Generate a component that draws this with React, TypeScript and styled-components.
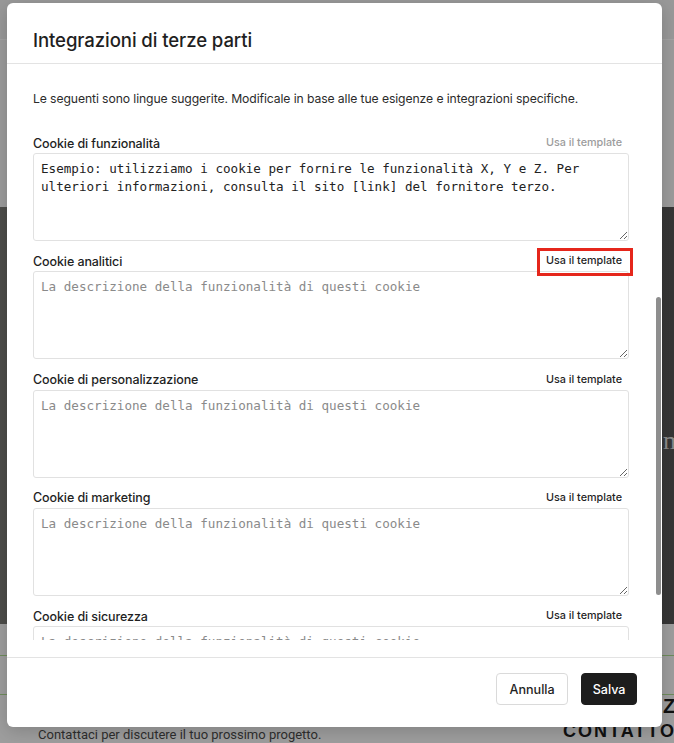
import React from "react";
import styled, { createGlobalStyle } from "styled-components";

const GlobalStyle = createGlobalStyle`
  html, body {
    margin: 0;
    height: 100%;
    overflow: hidden;
  }
  body {
    font-family: Inter, "Liberation Sans", sans-serif;
    background: #9b9b9b;
  }
  * {
    box-sizing: border-box;
  }
`;

type CookieField = {
  label: string;
  value?: string;
  templateDisabled?: boolean;
  highlighted?: boolean;
};

const PLACEHOLDER = "La descrizione della funzionalità di questi cookie";

const fields: CookieField[] = [
  {
    label: "Cookie di funzionalità",
    value:
      "Esempio: utilizziamo i cookie per fornire le funzionalità X, Y e Z. Per ulteriori informazioni, consulta il sito [link] del fornitore terzo.",
    templateDisabled: true,
  },
  { label: "Cookie analitici", highlighted: true },
  { label: "Cookie di personalizzazione" },
  { label: "Cookie di marketing" },
  { label: "Cookie di sicurezza" },
];

const Page = styled.div`
  position: relative;
  width: 674px;
  height: 743px;
  overflow: hidden;
  background: #9b9b9b;
`;
const PageNav = styled.div`
  height: 40px;
  border-bottom: 1px solid #a3a3a3;
  background: #999999;
`;
const PageIntro = styled.div`
  height: 167px;
  background: #9c9c9c;
`;
const Hero = styled.div`
  height: 417px;
  padding-top: 219px;
  background: linear-gradient(90deg, #4d4d4a 0%, #454543 60%, #363636 100%);
  overflow: hidden;
`;
const HeroWord = styled.div`
  padding-left: 663px;
  font-family: "Liberation Serif", serif;
  font-size: 26px;
  line-height: 30px;
  color: #8c8c8c;
  white-space: nowrap;
`;
const ContactGrid = styled.div`
  display: grid;
  grid-template-columns: 563px 1fr;
  grid-template-rows: 31px 1px 38px 1px auto;
  background: #9e9e9e;
`;
const Rule = styled.div<{ $row: number }>`
  grid-column: 1 / -1;
  grid-row: ${(p) => p.$row};
  background: #6f8c5c;
`;
const ContactText = styled.p`
  grid-column: 1;
  grid-row: 5;
  margin: 32px 0 0;
  padding-left: 38px;
  font-family: Roboto, "Liberation Sans", sans-serif;
  font-size: 13px;
  line-height: 16px;
  color: #2e2e2e;
`;
const ContactHeading = styled.h2`
  grid-column: 2;
  grid-row: 4 / 6;
  margin: 0;
  font-family: "Liberation Sans", sans-serif;
  font-size: 18px;
  font-weight: 700;
  line-height: 24px;
  letter-spacing: 2px;
  color: #111;
  white-space: nowrap;
`;
const HeadingIndent = styled.span`
  padding-left: 100px;
  font-size: 20px;
`;

/* dialog */
const Dialog = styled.div`
  position: absolute;
  left: 7px;
  top: 3px;
  width: 655px;
  height: 724px;
  display: flex;
  flex-direction: column;
  background: #fff;
  border-radius: 6px;
  box-shadow: 0 4px 18px rgba(0, 0, 0, 0.18);
  overflow: hidden;
`;
const DialogHeader = styled.header`
  padding: 25px 26px 11px;
  border-bottom: 1px solid #e3e3e3;
`;
const DialogTitle = styled.h1`
  margin: 0;
  font-size: 18.6px;
  font-weight: 500;
  line-height: 24px;
  color: #1f1f1f;
  letter-spacing: -0.1px;
`;
const DialogBody = styled.div`
  position: relative;
  flex: 1;
  display: flex;
  flex-direction: column;
  padding-bottom: 17px;
  min-height: 0;
`;
const ScrollArea = styled.div`
  flex: 1;
  overflow: hidden;
  padding: 27px 33px 0 26px;
`;
const ScrollThumb = styled.div`
  position: absolute;
  top: 233px;
  right: 1px;
  width: 5px;
  height: 298px;
  border-radius: 3px;
  background: #8e8e8e;
`;
const Intro = styled.p`
  margin: 0 0 27px;
  font-size: 12.2px;
  line-height: 16px;
  color: #2b2b2b;
  letter-spacing: -0.1px;
`;
const Field = styled.div`
  margin-bottom: 11.25px;
`;
const FieldHead = styled.div`
  display: flex;
  align-items: center;
  justify-content: space-between;
  height: 18px;
  margin-bottom: 1px;
`;
const FieldLabel = styled.label`
  font-size: 12.5px;
  font-weight: 500;
  color: #1f1f1f;
  letter-spacing: -0.1px;
`;
const TemplateButton = styled.button<{ $highlighted?: boolean }>`
  position: relative;
  margin-right: 7px;
  padding: 0;
  border: none;
  background: none;
  font-family: inherit;
  font-size: 10.8px;
  font-weight: 500;
  line-height: 14px;
  color: #1f1f1f;
  cursor: pointer;

  &:disabled {
    color: #9c9c9c;
    cursor: default;
  }

  &::after {
    content: "";
    display: ${(p) => (p.$highlighted ? "block" : "none")};
    position: absolute;
    top: -6px;
    right: -11px;
    bottom: -8px;
    left: -9px;
    border: 3px solid #e5261b;
  }
`;
const TextBox = styled.textarea`
  display: block;
  width: 100%;
  height: 88px;
  padding: 6px 7px;
  border: 1px solid #e1e1e1;
  border-radius: 3px;
  font-family: "DejaVu Sans Mono", "Liberation Mono", monospace;
  font-size: 12.6px;
  line-height: 18px;
  color: #222;
  resize: vertical;
  outline: none;

  &::placeholder {
    color: #8a8a8a;
  }
`;
const DialogFooter = styled.footer`
  display: flex;
  justify-content: flex-end;
  gap: 13px;
  padding: 15px 25px 22px;
  border-top: 1px solid #e3e3e3;
`;
const Button = styled.button<{ $primary?: boolean }>`
  height: 32px;
  padding: 0 ${(p) => (p.$primary ? "10.5px" : "12.5px")};
  border: 1px solid ${(p) => (p.$primary ? "#1d1d1d" : "#dadada")};
  border-radius: 4px;
  background: ${(p) => (p.$primary ? "#1d1d1d" : "#fff")};
  color: ${(p) => (p.$primary ? "#fff" : "#1f1f1f")};
  font-family: inherit;
  font-size: 12.6px;
  font-weight: 500;
  cursor: pointer;
`;

const App = () => {
  return (
    <>
      <GlobalStyle />
      <Page>
        <PageNav />
        <PageIntro />
        <Hero>
          <HeroWord>mondo</HeroWord>
        </Hero>
        <ContactGrid>
          <Rule $row={2} />
          <Rule $row={4} />
          <ContactText>Contattaci per discutere il tuo prossimo progetto.</ContactText>
          <ContactHeading>
            <HeadingIndent>ZONA</HeadingIndent>
            <br />
            CONTATTO
          </ContactHeading>
        </ContactGrid>

        <Dialog role="dialog" aria-modal="true">
          <DialogHeader>
            <DialogTitle>Integrazioni di terze parti</DialogTitle>
          </DialogHeader>
          <DialogBody>
            <ScrollArea>
              <Intro>
                Le seguenti sono lingue suggerite. Modificale in base alle tue
                esigenze e integrazioni specifiche.
              </Intro>
              {fields.map((field) => (
                <Field key={field.label}>
                  <FieldHead>
                    <FieldLabel>{field.label}</FieldLabel>
                    <TemplateButton
                      type="button"
                      disabled={field.templateDisabled}
                      $highlighted={field.highlighted}
                    >
                      Usa il template
                    </TemplateButton>
                  </FieldHead>
                  <TextBox
                    defaultValue={field.value}
                    placeholder={PLACEHOLDER}
                    spellCheck={false}
                  />
                </Field>
              ))}
            </ScrollArea>
            <ScrollThumb />
          </DialogBody>
          <DialogFooter>
            <Button type="button">Annulla</Button>
            <Button type="button" $primary>
              Salva
            </Button>
          </DialogFooter>
        </Dialog>
      </Page>
    </>
  );
};

export default App;
